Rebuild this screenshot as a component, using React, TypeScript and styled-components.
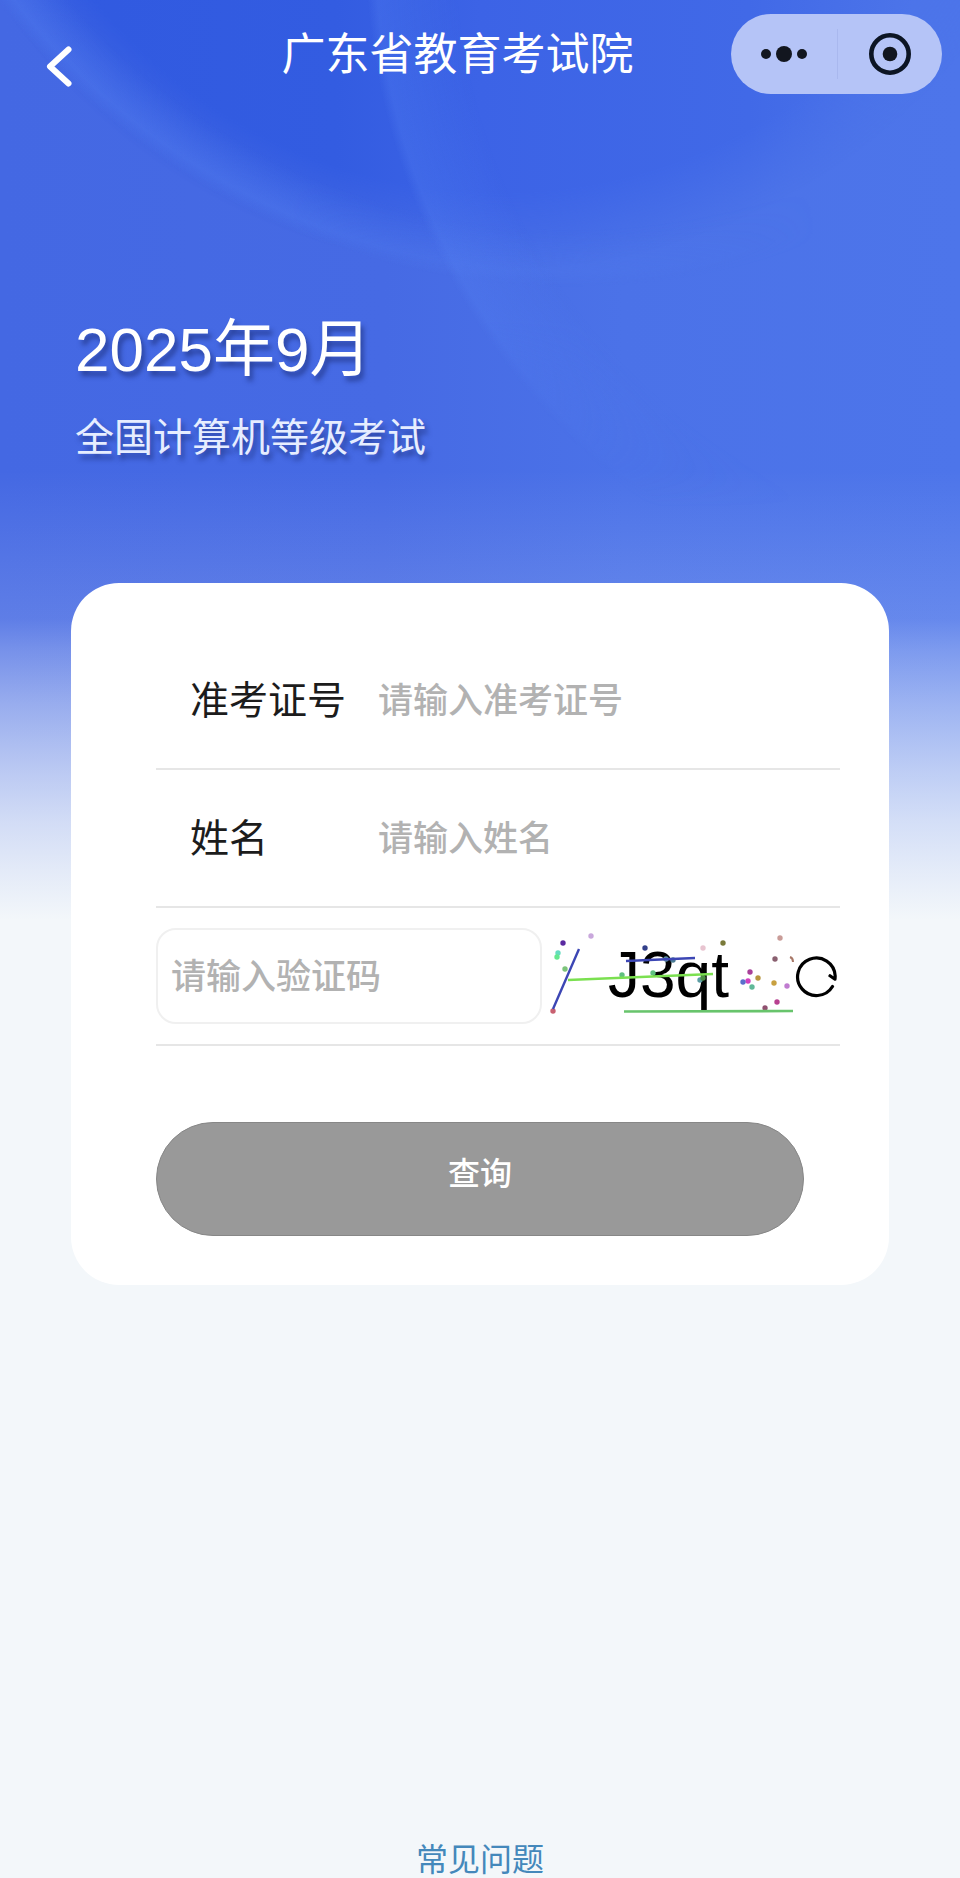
import React, { useState } from "react";
import styled, { createGlobalStyle } from "styled-components";

const GlobalStyle = createGlobalStyle`
  *, *::before, *::after { box-sizing: border-box; }
  body {
    margin: 0;
    background: #f3f7fa;
    font-family: "Liberation Sans", "Noto Sans CJK SC", sans-serif;
    color: #1c1c1c;
  }
  button, input { font: inherit; color: inherit; }
`;

const Page = styled.div`
  position: relative;
  display: flex;
  flex-direction: column;
  min-height: 100vh;
`;

const Backdrop = styled.svg`
  position: absolute;
  top: 0;
  left: 0;
  z-index: -1;
  width: 100%;
  height: 940px;
`;

const NavBar = styled.header`
  display: grid;
  grid-template-columns: 140px 1fr 211px;
  align-items: start;
  padding: 14px 18px 0 44px;
`;

const BackButton = styled.button`
  justify-self: start;
  display: flex;
  padding: 30px 0 0;
  border: 0;
  background: none;
  cursor: pointer;
`;

const NavTitle = styled.h1`
  margin: 0;
  font-size: 44px;
  font-weight: 400;
  line-height: 82px;
  text-align: center;
  white-space: nowrap;
  color: #fff;
`;

const Capsule = styled.div`
  display: grid;
  grid-template-columns: 1fr 1fr;
  height: 80px;
  border-radius: 40px;
  background: #b5c4f7;
`;

const CapsuleButton = styled.button`
  position: relative;
  display: flex;
  align-items: center;
  justify-content: center;
  padding: 0;
  border: 0;
  background: none;
  cursor: pointer;

  & + &::before {
    content: "";
    position: absolute;
    left: 0;
    width: 1px;
    height: 50px;
    background: #a9b8ee;
  }
`;

const Hero = styled.section`
  padding: 214px 75px 0;
  color: #fff;
  text-shadow: 3px 5px 5px rgba(20, 35, 100, 0.55);
`;

const HeroDate = styled.p`
  margin: 0;
  font-size: 62px;
  line-height: 80px;
`;

const HeroExam = styled.p`
  margin: 20px 0 0;
  font-size: 39px;
  line-height: 56px;
  color: #e6edff;
`;

const Card = styled.form`
  margin: 117px 71px 0;
  padding: 49px 49px 49px 85px;
  border-radius: 48px;
  background: #fff;
`;

const Row = styled.div<{ $inset?: boolean }>`
  display: flex;
  align-items: center;
  height: 138px;
  padding: ${(p) => (p.$inset ? "2px 0 0 34px" : "0")};
  border-bottom: 2px solid #e6e6e6;
`;

const Label = styled.label`
  flex: 0 0 188px;
  font-size: 39px;
  line-height: 56px;
`;

const TextInput = styled.input<{ $boxed?: boolean }>`
  flex: 1;
  min-width: 0;
  height: ${(p) => (p.$boxed ? 96 : 56)}px;
  padding: ${(p) => (p.$boxed ? "2px 13px 0" : "0")};
  border: ${(p) => (p.$boxed ? "2px solid #f0f0f0" : "0")};
  border-radius: ${(p) => (p.$boxed ? 20 : 0)}px;
  outline: 0;
  background: none;
  font-size: 35px;
  font-weight: 500;

  &::placeholder {
    color: #b2b2b2;
    opacity: 1;
  }
`;

const CaptchaImage = styled.svg`
  flex: none;
  margin-left: 8px;
`;

const RefreshButton = styled.button`
  display: flex;
  padding: 0 1px 0 0;
  border: 0;
  background: none;
  cursor: pointer;
`;

const SubmitButton = styled.button`
  display: block;
  width: calc(100% - 36px);
  height: 114px;
  margin-top: 76px;
  padding: 0 0 16px;
  border: 1px solid #878787;
  border-radius: 57px;
  background: #999;
  font-size: 32px;
  font-weight: 500;
  color: #fff;
  cursor: pointer;
`;

const Footer = styled.footer`
  margin-top: auto;
  text-align: center;
`;

const FaqLink = styled.a`
  display: block;
  font-size: 32px;
  line-height: 36px;
  color: #4488bb;
  text-decoration: none;
`;

const dots: [number, number, string][] = [
  [13, 13, "#5a2aa0"],
  [41, 6, "#c9a8dc"],
  [8, 23, "#66dcc0"],
  [7, 27, "#66e890"],
  [15, 39, "#7cc47a"],
  [3, 81, "#c86070"],
  [95, 18, "#33408a"],
  [153, 18, "#e8c4d0"],
  [173, 13, "#7a7a3a"],
  [230, 8, "#c99c98"],
  [225, 29, "#8a6070"],
  [200, 42, "#a8409a"],
  [198, 51, "#d040c0"],
  [193, 52, "#5a70cc"],
  [208, 48, "#b89640"],
  [202, 57, "#60b898"],
  [224, 53, "#c8a040"],
  [237, 56, "#c07cd0"],
  [227, 72, "#b84090"],
  [215, 78, "#905070"],
  [72, 45, "#60c080"],
  [103, 43, "#60c080"],
  [116, 29, "#5c8ea4"],
  [123, 30, "#4c7e94"],
  [150, 50, "#5c9ea4"],
  [153, 48, "#4c8e44"],
];

function HeroBackdrop() {
  return (
    <Backdrop viewBox="0 0 960 940" preserveAspectRatio="none" aria-hidden="true">
      <defs>
        <linearGradient id="base" x1="0" x2="1" y1="0" y2="0">
          <stop offset="0" stopColor="#4468e3" />
          <stop offset="0.4" stopColor="#466ae4" />
          <stop offset="0.65" stopColor="#4b72e8" />
          <stop offset="1" stopColor="#4d75ea" />
        </linearGradient>
        <linearGradient id="discFill" gradientUnits="userSpaceOnUse" x1="0" x2="960" y1="0" y2="0">
          <stop offset="0" stopColor="#3059e0" />
          <stop offset="0.35" stopColor="#335ce1" />
          <stop offset="0.5" stopColor="#3c63e6" />
          <stop offset="0.78" stopColor="#4169e7" />
          <stop offset="0.95" stopColor="#4c74e9" />
        </linearGradient>
        <radialGradient id="discFade" gradientUnits="userSpaceOnUse" cx="500" cy="-330" r="600">
          <stop offset="0.87" stopColor="#fff" />
          <stop offset="1" stopColor="#fff" stopOpacity="0" />
        </radialGradient>
        <mask id="discMask" maskUnits="userSpaceOnUse" x="0" y="0" width="960" height="940">
          <circle cx="500" cy="-330" r="600" fill="url(#discFade)" />
        </mask>
        <linearGradient id="rimFade" gradientUnits="userSpaceOnUse" x1="0" x2="960" y1="0" y2="0">
          <stop offset="0.3" stopColor="#fff" />
          <stop offset="0.85" stopColor="#fff" stopOpacity="0" />
        </linearGradient>
        <mask id="rimMask" maskUnits="userSpaceOnUse" x="0" y="0" width="960" height="940">
          <rect width="960" height="940" fill="url(#rimFade)" />
        </mask>
        <radialGradient id="discRim" gradientUnits="userSpaceOnUse" cx="570" cy="-430" r="717">
          <stop offset="0.92" stopColor="#5480f2" stopOpacity="0" />
          <stop offset="0.98" stopColor="#5480f2" stopOpacity="0.34" />
          <stop offset="1" stopColor="#5480f2" stopOpacity="0" />
        </radialGradient>
        <radialGradient id="arcRim" gradientUnits="userSpaceOnUse" cx="1064" cy="-56" r="699">
          <stop offset="0.87" stopColor="#5480f2" stopOpacity="0" />
          <stop offset="0.985" stopColor="#5480f2" stopOpacity="0.3" />
          <stop offset="1" stopColor="#5480f2" stopOpacity="0" />
        </radialGradient>
        <linearGradient id="arcFade" gradientUnits="userSpaceOnUse" x1="0" x2="0" y1="0" y2="940">
          <stop offset="0.34" stopColor="#fff" />
          <stop offset="0.54" stopColor="#fff" stopOpacity="0" />
        </linearGradient>
        <mask id="arcMask" maskUnits="userSpaceOnUse" x="0" y="0" width="960" height="940">
          <rect width="960" height="940" fill="url(#arcFade)" />
        </mask>
        <linearGradient id="fade" gradientUnits="userSpaceOnUse" x1="0" x2="0" y1="470" y2="920">
          <stop offset="0" stopColor="#f3f7fa" stopOpacity="0" />
          <stop offset="0.24" stopColor="#f3f7fa" stopOpacity="0.11" />
          <stop offset="0.33" stopColor="#f3f7fa" stopOpacity="0.15" />
          <stop offset="0.4" stopColor="#f3f7fa" stopOpacity="0.29" />
          <stop offset="0.52" stopColor="#f3f7fa" stopOpacity="0.48" />
          <stop offset="0.67" stopColor="#f3f7fa" stopOpacity="0.68" />
          <stop offset="0.78" stopColor="#f3f7fa" stopOpacity="0.81" />
          <stop offset="0.89" stopColor="#f3f7fa" stopOpacity="0.91" />
          <stop offset="1" stopColor="#f3f7fa" />
        </linearGradient>
      </defs>
      <rect width="960" height="940" fill="url(#base)" />
      <rect width="960" height="300" fill="url(#discFill)" mask="url(#discMask)" />
      <g mask="url(#rimMask)">
        <circle cx="570" cy="-430" r="717" fill="url(#discRim)" />
      </g>
      <g mask="url(#arcMask)">
        <circle cx="1064" cy="-56" r="699" fill="url(#arcRim)" />
      </g>
      <rect y="470" width="960" height="470" fill="url(#fade)" />
    </Backdrop>
  );
}

function Captcha() {
  return (
    <CaptchaImage width="245" height="92" viewBox="0 0 245 92" role="img" aria-label="验证码">
      <text x="58" y="67" fontFamily="Liberation Sans, sans-serif" fontSize="64" fill="#000">
        J3qt
      </text>
      {dots.map(([x, y, color]) => (
        <circle key={`${x}-${y}`} cx={x} cy={y} r="2.7" fill={color} />
      ))}
      <path d="M240 27Q243 28 243 32" stroke="#a87868" strokeWidth="2" fill="none" />
      <path d="M29 19L3 79M76 31L145 28" stroke="#3c46b4" strokeWidth="2.4" />
      <path d="M18 50L163 44" stroke="#7be050" strokeWidth="2.6" />
      <path d="M74 81.5L243 81" stroke="#68c46c" strokeWidth="2.6" />
    </CaptchaImage>
  );
}

export default function App() {
  const [ticket, setTicket] = useState("");
  const [name, setName] = useState("");
  const [code, setCode] = useState("");

  return (
    <Page>
      <GlobalStyle />
      <HeroBackdrop />
      <NavBar>
        <BackButton type="button" aria-label="返回">
          <svg width="30" height="44" viewBox="0 0 30 44" fill="none">
            <path
              d="M24.5 5.5L6 22.5L24.5 39.5"
              stroke="#fff"
              strokeWidth="6"
              strokeLinecap="round"
              strokeLinejoin="round"
            />
          </svg>
        </BackButton>
        <NavTitle>广东省教育考试院</NavTitle>
        <Capsule>
          <CapsuleButton type="button" aria-label="更多">
            <svg width="48" height="20" viewBox="0 0 48 20" fill="#12161f">
              <circle cx="6" cy="10" r="5" />
              <circle cx="24" cy="10" r="8" />
              <circle cx="42" cy="10" r="5" />
            </svg>
          </CapsuleButton>
          <CapsuleButton type="button" aria-label="关闭">
            <svg width="44" height="44" viewBox="0 0 44 44">
              <circle cx="23" cy="22" r="18.7" fill="none" stroke="#0c1524" strokeWidth="4.6" />
              <circle cx="23" cy="22" r="7.3" fill="#12161f" />
            </svg>
          </CapsuleButton>
        </Capsule>
      </NavBar>

      <Hero>
        <HeroDate>2025年9月</HeroDate>
        <HeroExam>全国计算机等级考试</HeroExam>
      </Hero>

      <Card onSubmit={(e) => e.preventDefault()}>
        <Row $inset>
          <Label htmlFor="ticket">准考证号</Label>
          <TextInput
            id="ticket"
            placeholder="请输入准考证号"
            value={ticket}
            onChange={(e) => setTicket(e.target.value)}
          />
        </Row>
        <Row $inset>
          <Label htmlFor="name">姓名</Label>
          <TextInput
            id="name"
            placeholder="请输入姓名"
            value={name}
            onChange={(e) => setName(e.target.value)}
          />
        </Row>
        <Row>
          <TextInput
            $boxed
            aria-label="验证码"
            placeholder="请输入验证码"
            value={code}
            onChange={(e) => setCode(e.target.value)}
          />
          <Captcha />
          <RefreshButton type="button" aria-label="刷新验证码">
            <svg width="44" height="44" viewBox="0 0 44 44" fill="none">
              <path
                d="M37.5 32.5A18.8 18.8 0 1 1 40.2 22L40 25.2L35 21.8"
                stroke="#000"
                strokeWidth="3.2"
                strokeLinecap="round"
                strokeLinejoin="round"
              />
            </svg>
          </RefreshButton>
        </Row>
        <SubmitButton type="submit">查询</SubmitButton>
      </Card>

      <Footer>
        <FaqLink href="#faq">常见问题</FaqLink>
      </Footer>
    </Page>
  );
}
